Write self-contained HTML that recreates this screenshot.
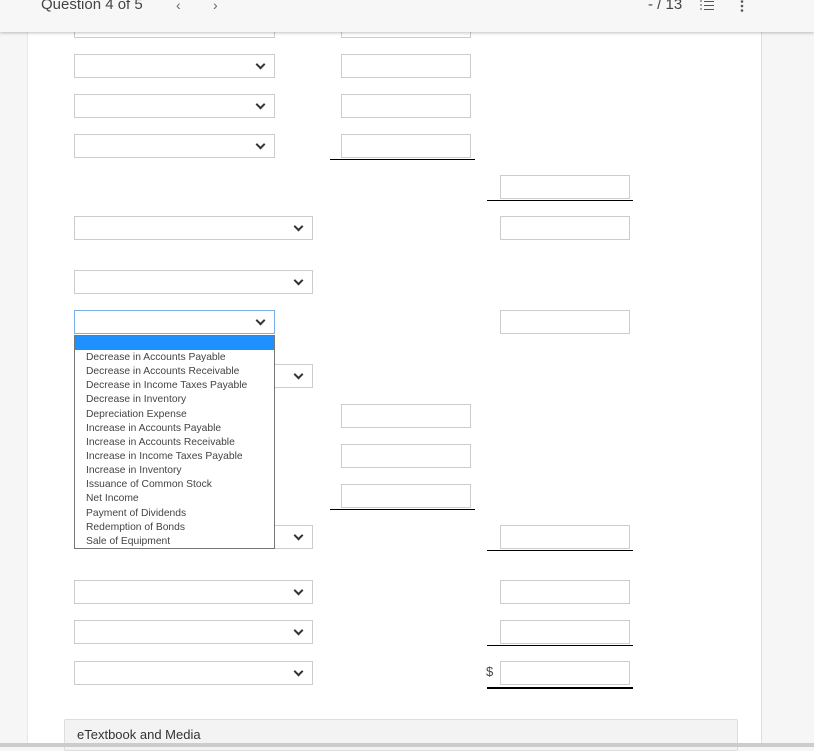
<!DOCTYPE html>
<html><head><style>
body{margin:0;width:814px;height:747px;overflow:hidden;background:#f6f6f6;font-family:"Liberation Sans",sans-serif;position:relative}
.a{position:absolute}
.panel{left:27px;top:0;width:733px;height:747px;background:#fff;border-right:1px solid #ddd;border-left:1px solid #e6e6e6}
.hdr{left:0;top:0;width:814px;height:32px;background:#f7f7f7;box-shadow:0 1px 3px rgba(0,0,0,.25);z-index:5}
.sel,.inp{position:absolute;height:22px;border:1px solid #ccc;background:#fff;box-sizing:content-box}
.sel::after{content:"";position:absolute;right:10px;top:6px;width:5px;height:5px;border-right:2px solid #333;border-bottom:2px solid #333;transform:rotate(45deg)}
.ln{position:absolute;height:1px;background:#000}
.dd{left:74px;top:335px;width:199px;height:212px;border:1px solid #767676;background:#fff;z-index:3;font-size:10.3px;color:#444}
.dd div{height:14.15px;line-height:14px;padding-left:11px;white-space:nowrap}
</style></head><body>
<div class="a panel"></div>
<div class="a hdr">
<span class="a" style="left:41px;top:-4px;font-size:15px;color:#444">Question 4 of 5</span>
<span class="a" style="left:176px;top:-3px;font-size:14px;color:#666">&lsaquo;</span>
<span class="a" style="left:213px;top:-3px;font-size:14px;color:#666">&rsaquo;</span>
<span class="a" style="left:648px;top:-4px;font-size:15px;color:#444">- / 13</span>
<svg class="a" style="left:699px;top:0" width="16" height="12"><g stroke="#555" stroke-width="1"><line x1="5" y1="1.5" x2="15" y2="1.5"/><line x1="5" y1="5.5" x2="15" y2="5.5"/><line x1="5" y1="9.5" x2="15" y2="9.5"/><line x1="1" y1="1" x2="3" y2="1"/><line x1="1" y1="5" x2="3" y2="5"/><line x1="1" y1="9" x2="3" y2="9"/></g></svg>
<svg class="a" style="left:740px;top:0" width="4" height="14"><circle cx="2" cy="1.5" r="1.3" fill="#555"/><circle cx="2" cy="6" r="1.3" fill="#555"/><circle cx="2" cy="10.5" r="1.3" fill="#555"/></svg>
</div>
<div class="sel" style="left:74px;top:14px;width:199px"></div><div class="inp" style="left:341px;top:14px;width:128px"></div>
<div class="sel" style="left:74px;top:54px;width:199px"></div><div class="inp" style="left:341px;top:54px;width:128px"></div>
<div class="sel" style="left:74px;top:94px;width:199px"></div><div class="inp" style="left:341px;top:94px;width:128px"></div>
<div class="sel" style="left:74px;top:134px;width:199px"></div><div class="inp" style="left:341px;top:134px;width:128px"></div>
<div class="ln" style="left:330px;top:159px;width:145px"></div>
<div class="inp" style="left:500px;top:175px;width:128px"></div>
<div class="ln" style="left:487px;top:200px;width:146px"></div>
<div class="sel" style="left:74px;top:216px;width:237px"></div><div class="inp" style="left:500px;top:216px;width:128px"></div>
<div class="sel" style="left:74px;top:270px;width:237px"></div>
<div class="sel" style="left:74px;top:310px;width:199px;border-color:#7aaee8"></div><div class="inp" style="left:500px;top:310px;width:128px"></div>
<div class="sel" style="left:74px;top:364px;width:237px"></div>
<div class="inp" style="left:341px;top:404px;width:128px"></div>
<div class="inp" style="left:341px;top:444px;width:128px"></div>
<div class="inp" style="left:341px;top:484px;width:128px"></div>
<div class="ln" style="left:330px;top:509px;width:145px"></div>
<div class="sel" style="left:74px;top:525px;width:237px"></div><div class="inp" style="left:500px;top:525px;width:128px"></div>
<div class="ln" style="left:487px;top:550px;width:146px"></div>
<div class="sel" style="left:74px;top:580px;width:237px"></div><div class="inp" style="left:500px;top:580px;width:128px"></div>
<div class="sel" style="left:74px;top:620px;width:237px"></div><div class="inp" style="left:500px;top:620px;width:128px"></div>
<div class="ln" style="left:487px;top:645px;width:146px"></div>
<div class="sel" style="left:74px;top:661px;width:237px"></div>
<span class="a" style="left:486px;top:664px;font-size:13px;color:#445">$</span>
<div class="inp" style="left:500px;top:661px;width:128px"></div>
<div class="ln" style="left:487px;top:687px;width:146px;height:2px"></div>
<div class="a dd">
<div style="background:#1e90ff;height:14px;margin-bottom:1px"></div>
<div>Decrease in Accounts Payable</div><div>Decrease in Accounts Receivable</div><div>Decrease in Income Taxes Payable</div><div>Decrease in Inventory</div><div>Depreciation Expense</div><div>Increase in Accounts Payable</div><div>Increase in Accounts Receivable</div><div>Increase in Income Taxes Payable</div><div>Increase in Inventory</div><div>Issuance of Common Stock</div><div>Net Income</div><div>Payment of Dividends</div><div>Redemption of Bonds</div><div>Sale of Equipment</div>
</div>
<div class="a" style="left:64px;top:719px;width:672px;height:30px;background:#f3f3f3;border:1px solid #ddd;border-radius:2px"><span class="a" style="left:12px;top:7px;font-size:13px;color:#333">eTextbook and Media</span></div>
<div class="a" style="left:0;top:743px;width:814px;height:4px;background:#ccc;z-index:6"></div>
</body></html>
